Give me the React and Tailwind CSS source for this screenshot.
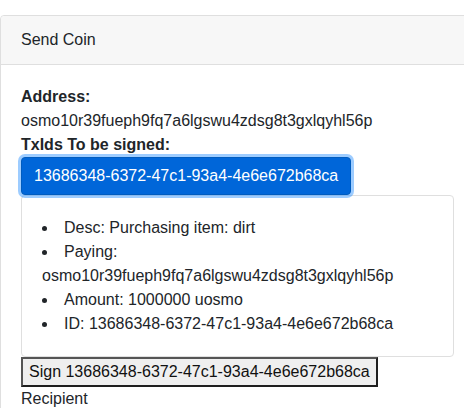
export default function App() {
  const txId = "13686348-6372-47c1-93a4-4e6e672b68ca";
  const address = "osmo10r39fueph9fq7a6lgswu4zdsg8t3gxlqyhl56p";

  return (
    <div className="h-screen overflow-hidden bg-white pt-[15px] font-['Liberation_Sans',Arial,sans-serif] text-[16px] leading-6 text-[#212529]">
      <div className="w-[475px] rounded border border-[#dfdfdf] bg-white">
        <div className="border-b border-[#dfdfdf] bg-[#f7f7f7] px-5 py-3 rounded-t">Send Coin</div>
        <div className="p-5">
          <div className="font-bold">Address:</div>
          <div>{address}</div>
          <div className="font-bold">TxIds To be signed:</div>
          <button className="rounded border border-[#005cbf] bg-[#0066d9] px-3 py-1.5 text-white shadow-[0_0_0_3px_rgba(38,143,255,0.45)]">
            {txId}
          </button>
          <div className="w-[433px] rounded border border-[#dfdfdf] p-5">
            <ul className="list-inside list-disc">
              <li>Desc: Purchasing item: dirt</li>
              <li>Paying: {address}</li>
              <li>Amount: 1000000 uosmo</li>
              <li>ID: {txId}</li>
            </ul>
          </div>
          <button className="border-2 border-t-[#555] border-l-[#555] border-b-[#1f1f1f] border-r-[#1f1f1f] bg-[#efefef] px-1.5 py-px leading-6 text-[#111]">
            Sign {txId}
          </button>
          <div>Recipient</div>
          <input className="mt-1 w-[433px] rounded border border-[#ced4da] px-3 py-1.5" />
        </div>
      </div>
    </div>
  );
}
